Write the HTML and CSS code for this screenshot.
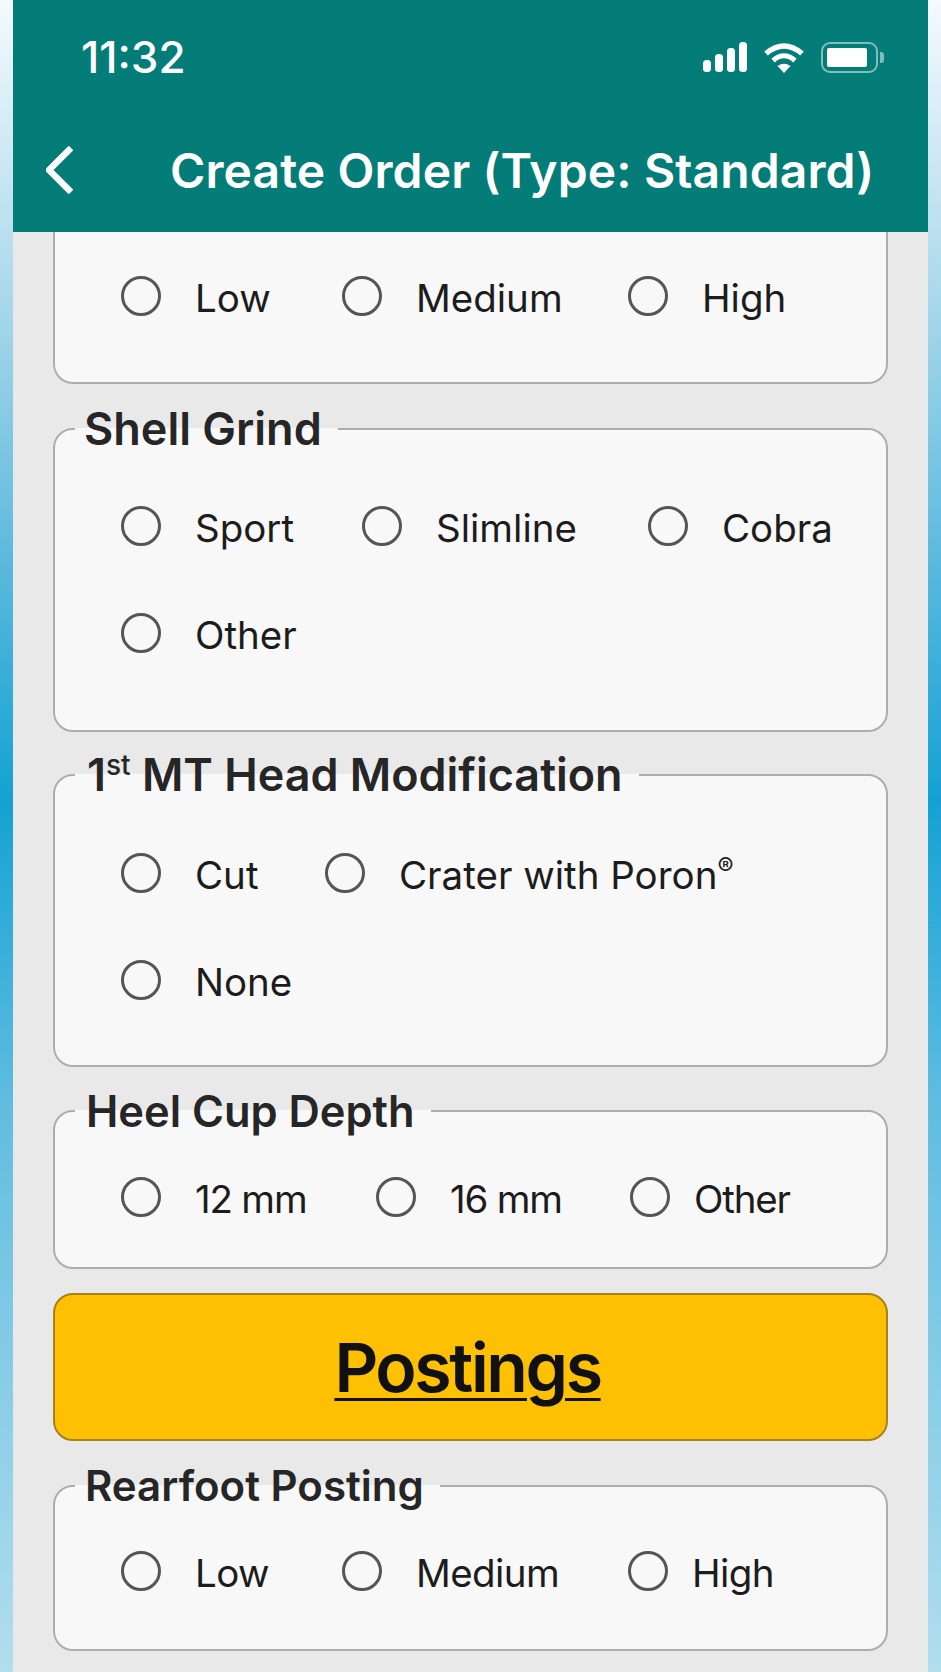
FILE: index.html
```html
<!DOCTYPE html>
<html lang="en">
<head>
  <meta charset="UTF-8" />
  <meta name="viewport" content="width=device-width, initial-scale=1.0"/>
  <title>Create Order</title>
  <link rel="stylesheet" href="styles.css">
</head>
<body>
  <div class="phone">
    <header class="app-header">
      <div class="status-bar">
        <span class="clock">11:32</span>
        <div class="status-icons">
          <svg class="icon-signal" width="44" height="30" viewBox="0 0 44 30" fill="#fff">
            <rect x="0" y="18" width="8" height="12" rx="3.5"/>
            <rect x="12" y="12" width="8" height="18" rx="3.5"/>
            <rect x="24" y="6" width="8" height="24" rx="3.5"/>
            <rect x="36" y="0" width="8" height="30" rx="3.5"/>
          </svg>
          <svg class="icon-wifi" width="40" height="31" viewBox="0 0 40 31" fill="none" stroke="#fff">
            <path d="M2 11.5Q20 -3.5 38 11.5" stroke-width="5.5"/>
            <path d="M9 18.5Q20 9 31 18.5" stroke-width="5"/>
            <path d="M13.5 24Q20 19.5 26.5 24L20 31Z" fill="#fff" stroke="none"/>
          </svg>
          <div class="battery">
            <div class="battery-fill"></div>
          </div>
          <div class="battery-nub"></div>
        </div>
      </div>
      <div class="title-row">
        <svg class="icon-back" width="28" height="48" viewBox="0 0 28 48" fill="none" stroke="#fff" stroke-width="6.5">
          <path d="M25 2L3 24L25 46"/>
        </svg>
        <h1 class="page-title">Create Order (Type: Standard)</h1>
      </div>
    </header>

    <main class="form-area">
      <fieldset class="card card-cut">
        <div class="options cols-level">
          <label class="option"><input type="radio" name="top"><span>Low</span></label>
          <label class="option"><input type="radio" name="top"><span>Medium</span></label>
          <label class="option"><input type="radio" name="top"><span>High</span></label>
        </div>
      </fieldset>

      <fieldset class="card card-shell">
        <legend>Shell Grind</legend>
        <div class="options cols-shell">
          <label class="option"><input type="radio" name="shell"><span>Sport</span></label>
          <label class="option"><input type="radio" name="shell"><span>Slimline</span></label>
          <label class="option"><input type="radio" name="shell"><span>Cobra</span></label>
          <label class="option"><input type="radio" name="shell"><span>Other</span></label>
        </div>
      </fieldset>

      <fieldset class="card card-head">
        <legend>1<sup>st</sup> MT Head Modification</legend>
        <div class="options cols-head">
          <label class="option"><input type="radio" name="head"><span>Cut</span></label>
          <label class="option"><input type="radio" name="head"><span>Crater with Poron<sup class="reg">®</sup></span></label>
          <label class="option"><input type="radio" name="head"><span>None</span></label>
        </div>
      </fieldset>

      <fieldset class="card card-heel">
        <legend>Heel Cup Depth</legend>
        <div class="options cols-heel">
          <label class="option"><input type="radio" name="heel"><span>12 mm</span></label>
          <label class="option"><input type="radio" name="heel"><span>16 mm</span></label>
          <label class="option tight"><input type="radio" name="heel"><span>Other</span></label>
        </div>
      </fieldset>

      <button class="section-button" type="button">Postings</button>

      <fieldset class="card card-rear">
        <legend>Rearfoot Posting</legend>
        <div class="options cols-level">
          <label class="option"><input type="radio" name="rear"><span>Low</span></label>
          <label class="option"><input type="radio" name="rear"><span>Medium</span></label>
          <label class="option tight"><input type="radio" name="rear"><span>High</span></label>
        </div>
      </fieldset>
    </main>
  </div>
</body>
</html>
```

FILE: styles.css
```css
* {
  box-sizing: border-box;
}

html,
body {
  height: 1672px;
  margin: 0;
  overflow: hidden;
}

body {
  font-family: "Inter", "Liberation Sans", sans-serif;
  padding: 0 13px;
  background: linear-gradient(to bottom, #f4fafd 0, #a9d8eb 300px, #5cb9dd 560px, #14a2d3 800px, #60bce0 1100px, #b2deee 1672px);
}

.phone {
  height: 1672px;
  display: flex;
  flex-direction: column;
  background: #e9e9e9;
}

/* header */
.app-header {
  height: 232px;
  flex-shrink: 0;
  padding-top: 33px;
  background: #047c78;
  color: #fff;
}

.status-bar {
  display: flex;
  justify-content: space-between;
  align-items: center;
  height: 48px;
  padding: 0 44px 0 68px;
}

.clock {
  font-size: 44px;
  font-weight: 500;
}

.status-icons {
  display: flex;
  align-items: center;
}

.icon-signal,
.icon-wifi {
  margin-right: 17px;
}

.battery {
  width: 57px;
  height: 31px;
  padding: 4px;
  border: 2px solid rgba(255, 255, 255, 0.5);
  border-radius: 9px;
}

.battery-fill {
  height: 100%;
  width: 40px;
  background: #fff;
  border-radius: 2px;
}

.battery-nub {
  width: 4px;
  height: 11px;
  margin-left: 2px;
  background: rgba(255, 255, 255, 0.5);
  border-radius: 0 3px 3px 0;
}

.title-row {
  display: flex;
  align-items: center;
  height: 58px;
  margin-top: 60px;
  padding-left: 33px;
}

.page-title {
  margin: 0 0 0 96px;
  font-size: 48px;
  font-weight: 600;
  letter-spacing: 0.11px;
  white-space: nowrap;
}

/* form */
.form-area {
  flex-grow: 1;
  padding: 0 40px;
  overflow: hidden;
}

.card {
  min-width: 0;
  margin: 23px 0 0;
  padding: 0;
  background: #f8f8f8;
  border: 2px solid #adadad;
  border-radius: 20px;
}

.card legend {
  height: 44px;
  margin-left: 20px;
  padding: 0 16px 0 9px;
  font-size: 43px;
  font-weight: 600;
  line-height: 44px;
  color: #262626;
  white-space: nowrap;
}

.card legend sup {
  font-size: 28px;
  font-weight: 500;
  line-height: 0;
}

.card-cut {
  height: 152px;
  margin-top: 0;
  padding-top: 44px;
  border-top: 0;
  border-radius: 0 0 20px 20px;
}

.card-shell {
  height: 325px;
  padding-top: 55px;
}

.card-shell legend {
  font-size: 45px;
}

.card-head {
  height: 314px;
  margin-top: 21px;
  padding-top: 56px;
}

.card-head legend {
  padding-left: 12px;
  font-size: 44.9px;
}

.card-heel {
  height: 180px;
  margin-top: 22px;
  padding-top: 44px;
}

.card-heel legend {
  padding-left: 11px;
  font-size: 43.4px;
}

.card-heel .option {
  letter-spacing: -1.2px;
}

.card-rear {
  height: 187px;
  padding-top: 43px;
}

.card-rear legend {
  padding-left: 10px;
  font-size: 42px;
}

.card-rear .option {
  letter-spacing: -0.6px;
}

.options {
  display: grid;
  row-gap: 67px;
  align-items: center;
  padding-left: 66px;
}

.cols-level {
  grid-template-columns: 221px 286px auto;
}

.cols-shell {
  grid-template-columns: 241px 286px auto;
}

.cols-head {
  grid-template-columns: 204px auto;
}

.cols-heel {
  grid-template-columns: 255px 254px auto;
}

.option {
  display: flex;
  align-items: center;
  gap: 34px;
  height: 40px;
  font-size: 38.5px;
  color: #1c1c1c;
  white-space: nowrap;
}

.option span {
  padding-top: 3px;
}

.option.tight {
  gap: 24px;
}

.option input {
  appearance: none;
  flex-shrink: 0;
  width: 40px;
  height: 40px;
  margin: 0;
  background: transparent;
  border: 3px solid #555;
  border-radius: 50%;
}

.reg {
  font-size: 24px;
  line-height: 0;
}

.section-button {
  display: block;
  width: 100%;
  height: 148px;
  margin-top: 24px;
  padding: 0 6px 0 0;
  font-family: inherit;
  font-size: 68px;
  font-weight: 600;
  letter-spacing: -2.4px;
  color: #111;
  text-decoration: underline;
  text-decoration-thickness: 3px;
  text-underline-offset: 6px;
  background: #fec003;
  border: 2px solid #a5831c;
  border-radius: 20px;
}
```
